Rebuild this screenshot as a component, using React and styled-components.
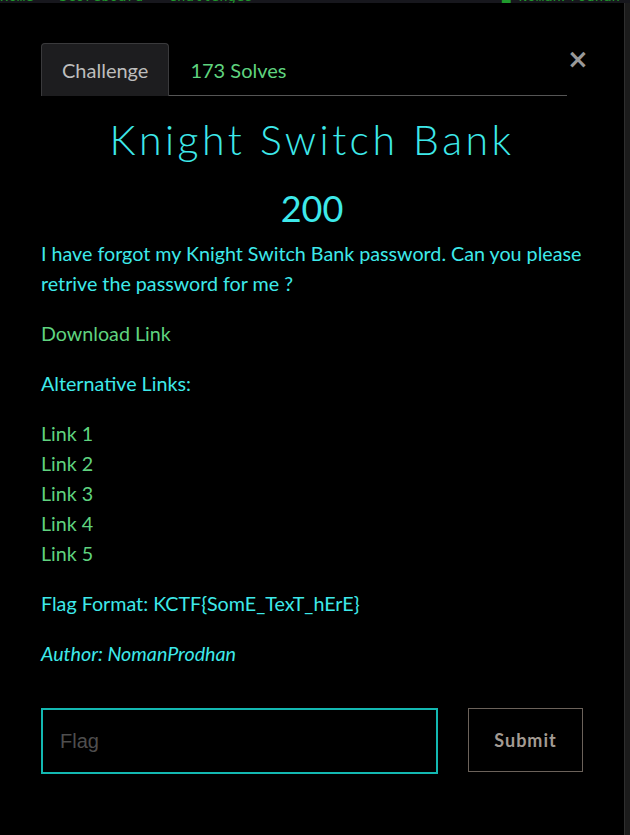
import React from 'react';
import styled, {createGlobalStyle} from 'styled-components';

const GlobalStyle = createGlobalStyle`
    html, body {
        margin: 0;
        padding: 0;
        background: #000;
    }
    body {
        font-family: Lato, "Open Sans", sans-serif;
        overflow: hidden;
    }
`;

const Page = styled.div`
    display: flex;
    flex-direction: column;
    width: 630px;
    height: 835px;
    background: #000;
`;

const NavPeek = styled.div`
    height: 3px;
    background: #17171d;
    overflow: hidden;
    display: flex;
    justify-content: space-between;
    padding-right: 10px;
`;

const NavText = styled.span`
    font-family: "DejaVu Sans Mono", monospace;
    font-size: 14px;
    line-height: 14px;
    margin-top: -11px;
    color: #1f9a2c;
    white-space: pre;
`;

const Body = styled.div`
    flex: 1;
    display: flex;
`;

const Modal = styled.div`
    flex: 1;
    background: #000;
    padding: 40px 41px 0 41px;
    display: flex;
    flex-direction: column;
`;

const Scrollbar = styled.div`
    width: 7px;
    background: #1c1c1c;
    border-left: 1px solid #2f2f2f;
`;

const Header = styled.div`
    display: flex;
    align-items: flex-start;
`;

const Tabs = styled.ul`
    flex: 1;
    display: flex;
    list-style: none;
    margin: 0;
    padding: 0;
    border-bottom: 1px solid #555;
`;

const Tab = styled.li`
    height: 52px;
    display: flex;
    align-items: center;
    padding: 0 20px;
    font-size: 20px;
    color: ${props => props.active ? '#bdbdbd' : '#5fd37f'};
    background: ${props => props.active ? '#1d1d1f' : 'transparent'};
    border: 1px solid ${props => props.active ? '#3a3a3c' : 'transparent'};
    border-bottom: none;
    border-radius: 4px 4px 0 0;
    margin-bottom: -1px;
`;

const Close = styled.button`
    background: none;
    border: none;
    padding: 0;
    margin: 3px 0 0 0;
    width: 16px;
    color: #999;
    font-family: "DejaVu Sans", sans-serif;
    font-size: 26px;
    font-weight: bold;
    line-height: 26px;
`;

const Title = styled.h2`
    margin: 19px 0 0;
    text-align: center;
    font-family: Lato, sans-serif;
    font-weight: 300;
    font-size: 41px;
    letter-spacing: 3.5px;
    line-height: 50px;
    color: #3ee9ea;
`;

const Value = styled.h3`
    margin: 21px 0 0;
    text-align: center;
    font-weight: 400;
    font-size: 36px;
    line-height: 44px;
    color: #3ee9ea;
`;

const Description = styled.div`
    margin-top: 9px;
    font-size: 19.7px;
    line-height: 30px;
    color: #3ee9ea;
    p {
        margin: 0 0 20px;
    }
    a {
        color: #5fd37f;
        text-decoration: none;
    }
    em {
        font-style: italic;
    }
`;

const Form = styled.form`
    display: flex;
    align-items: flex-start;
    margin-top: 19px;
`;

const FlagInput = styled.input`
    width: 397px;
    height: 66px;
    box-sizing: border-box;
    background: #000;
    border: 2px solid #13b8b1;
    padding: 0 17px;
    font-family: "Liberation Sans", Arial, sans-serif;
    font-size: 20px;
    color: #ddd;
    outline: none;
    &::placeholder {
        color: #4e4e4e;
    }
`;

const SubmitButton = styled.button`
    margin-left: 30px;
    width: 115px;
    height: 64px;
    background: #000;
    border: 1px solid #6b625a;
    color: #a39b93;
    font-family: Lato, sans-serif;
    font-weight: bold;
    font-size: 18px;
    letter-spacing: 1px;
`;

const links = ['Link 1', 'Link 2', 'Link 3', 'Link 4', 'Link 5'];

export default function App() {
    return (
        <Page>
            <GlobalStyle/>
            <NavPeek>
                <NavText>{'Home   Scoreboard   Challenges'}</NavText>
                <NavText>{'\u2588 NomanProdhan'}</NavText>
            </NavPeek>
            <Body>
                <Modal>
                    <Header>
                        <Tabs>
                            <Tab active>Challenge</Tab>
                            <Tab>173 Solves</Tab>
                        </Tabs>
                        <Close>×</Close>
                    </Header>
                    <Title>Knight Switch Bank</Title>
                    <Value>200</Value>
                    <Description>
                        <p>I have forgot my Knight Switch Bank password. Can you please retrive the password for me ?</p>
                        <p><a href="#">Download Link</a></p>
                        <p>Alternative Links:</p>
                        <p>
                            {links.map(l => (
                                <React.Fragment key={l}>
                                    <a href="#">{l}</a><br/>
                                </React.Fragment>
                            ))}
                        </p>
                        <p>Flag Format: KCTF&#123;SomE_TexT_hErE&#125;</p>
                        <p><em>Author: NomanProdhan</em></p>
                    </Description>
                    <Form onSubmit={e => e.preventDefault()}>
                        <FlagInput placeholder="Flag"/>
                        <SubmitButton type="submit">Submit</SubmitButton>
                    </Form>
                </Modal>
                <Scrollbar/>
            </Body>
        </Page>
    );
}
